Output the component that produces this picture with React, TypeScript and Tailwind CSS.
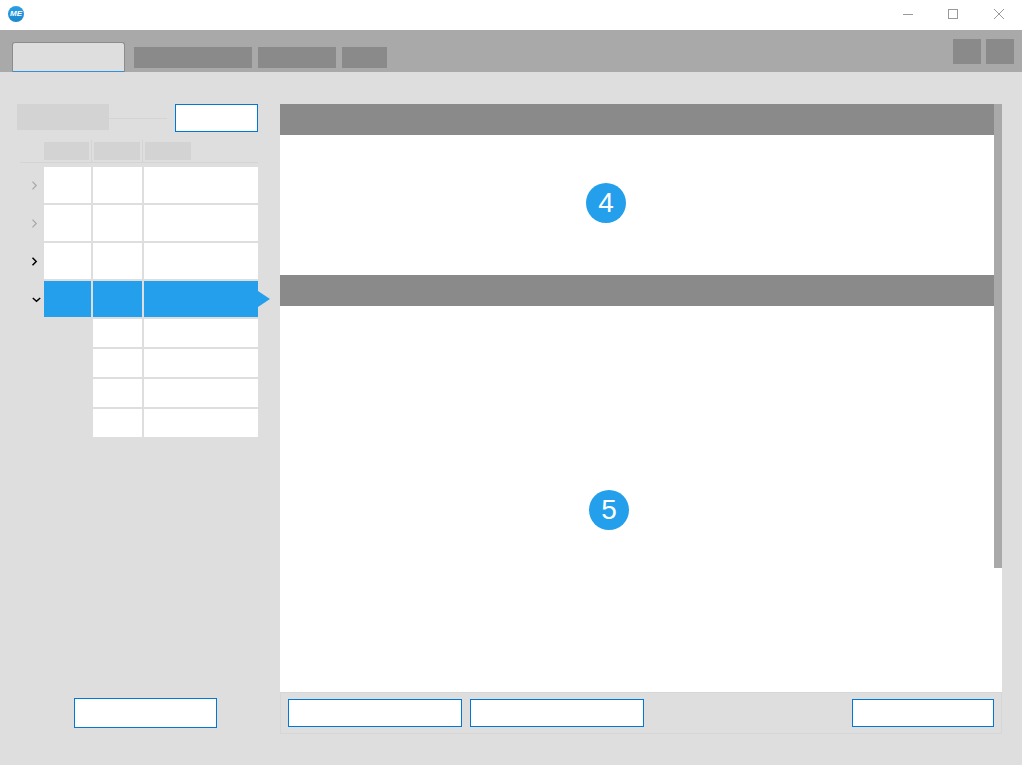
const Chevron = ({ down, color }: { down?: boolean; color: string }) => (
  <svg width="9" height="9" viewBox="0 0 9 9" fill="none" stroke={color} strokeWidth={color === "#000000" ? 1.5 : 1.2}>
    <path d={down ? "M0.8 3 L4.5 6.3 L8.2 3" : "M2.5 0.7 L6.2 4.5 L2.5 8.3"} />
  </svg>
);

const TREE_ROWS = [
  { color: "#a6a6a6", selected: false },
  { color: "#a6a6a6", selected: false },
  { color: "#000000", selected: false },
  { color: "#000000", selected: true, down: true },
];

function TitleBar() {
  return (
    <div className="flex h-[30px] items-center bg-white pb-[2px] pl-2">
      <div className="flex h-4 w-4 items-center justify-center rounded-full bg-gradient-to-b from-[#2aa0e6] to-[#1b86cc] text-[8px] font-bold italic leading-none text-white">
        ME
      </div>
      <div className="ml-auto flex items-center">
        <svg width="10" height="10" viewBox="0 0 10 10" stroke="#999999" fill="none" className="mr-[35px]">
          <path d="M0 5.5 H10" />
        </svg>
        <svg width="10" height="10" viewBox="0 0 10 10" stroke="#999999" fill="none" className="mr-[36px]">
          <rect x="0.5" y="0.5" width="9" height="9" />
        </svg>
        <svg width="10" height="10" viewBox="0 0 10 10" stroke="#999999" fill="none" className="mr-[18px]">
          <path d="M0 0 L10 10 M10 0 L0 10" />
        </svg>
      </div>
    </div>
  );
}

function Toolbar() {
  return (
    <div className="flex h-[42px] bg-[#a9a9a9] pl-3 pr-2">
      <div className="mt-3 h-[30px] w-[113px] rounded-t-[3px] border border-b-0 border-[#8c8c8c] bg-[#dedede] shadow-[inset_0_-1px_0_#2f93dc]" />
      <div className="ml-[9px] mt-[17px] h-[21px] w-[118px] bg-[#8a8a8a]" />
      <div className="ml-[6px] mt-[17px] h-[21px] w-[78px] bg-[#8a8a8a]" />
      <div className="ml-[6px] mt-[17px] h-[21px] w-[45px] bg-[#8a8a8a]" />
      <div className="ml-auto mt-[9px] h-[25px] w-7 bg-[#8a8a8a]" />
      <div className="ml-[5px] mt-[9px] h-[25px] w-7 bg-[#8a8a8a]" />
    </div>
  );
}

function TreeTable() {
  return (
    <div>
      <div className="mt-2 ml-[3px] flex h-[23px] items-start border-b border-[#d4d4d4] pl-6">
        <div className="mt-[2px] h-[18px] w-[45px] bg-[#d3d3d3]" />
        <div className="mx-[2px] h-[22px] w-px bg-[#d4d4d4]" />
        <div className="mt-[2px] h-[18px] w-[46px] bg-[#d3d3d3]" />
        <div className="mx-[2px] h-[22px] w-px bg-[#d4d4d4]" />
        <div className="mt-[2px] h-[18px] w-[46px] bg-[#d3d3d3]" />
      </div>

      <div className="mt-1 flex flex-col gap-[2px]">
        {TREE_ROWS.map((row, i) => (
          <div key={i} className="flex h-9 items-center">
            <div className={`flex w-[27px] justify-end ${row.down ? "pr-[3px]" : "pr-[5px]"}`}>
              <Chevron color={row.color} down={row.down} />
            </div>
            <div className={`h-full w-[47px] ${row.selected ? "bg-[#239fec]" : "bg-white"}`} />
            <div className={`ml-[2px] h-full w-[49px] ${row.selected ? "bg-[#239fec]" : "bg-white"}`} />
            <div className={`relative ml-[2px] h-full w-[114px] ${row.selected ? "bg-[#239fec]" : "bg-white"}`}>
              {row.selected && (
                <div className="absolute left-full top-[10px] h-0 w-0 border-y-[8px] border-l-[12px] border-y-transparent border-l-[#239fec]" />
              )}
            </div>
          </div>
        ))}
        {[0, 1, 2, 3].map((i) => (
          <div key={i} className="ml-[76px] flex h-7">
            <div className="h-full w-[49px] bg-white" />
            <div className="ml-[2px] h-full w-[114px] bg-white" />
          </div>
        ))}
      </div>
    </div>
  );
}

const NumberBadge = ({ value, className }: { value: number; className: string }) => (
  <div className={`flex h-10 w-10 items-center justify-center rounded-full bg-[#239fec] text-[28px] text-white ${className}`}>
    {value}
  </div>
);

export default function App() {
  return (
    <div className="h-[765px] w-[1022px] overflow-hidden bg-[#dedede] font-['Liberation_Sans',sans-serif]">
      <TitleBar />
      <Toolbar />
      <div className="flex pl-[17px] pt-8">
        {/* left list */}
        <div className="flex h-[630px] w-[241px] flex-col">
          <div className="flex h-7 items-start">
            <div className="h-[26px] w-[92px] bg-[#d3d3d3]" />
            <div className="mt-[14px] h-px w-[58px] bg-[#d4d4d4]" />
            <div className="ml-2 h-7 w-[83px] border border-[#0078d7] bg-white" />
          </div>
          <TreeTable />
          <div className="mb-[6px] ml-[57px] mt-auto h-[30px] w-[143px] border border-[#0078d7] bg-white" />
        </div>

        {/* right panel */}
        <div className="ml-[22px] flex h-[630px] w-[722px] flex-col">
          <div className="flex flex-1 bg-white">
            <div className="flex flex-1 flex-col">
              <div className="h-[31px] bg-[#8a8a8a]" />
              <div className="flex h-[140px] items-center pb-[4px]">
                <NumberBadge value={4} className="ml-[306px]" />
              </div>
              <div className="h-[31px] bg-[#8a8a8a]" />
              <div className="flex flex-1 items-start pt-[184px]">
                <NumberBadge value={5} className="ml-[309px]" />
              </div>
            </div>
            <div className="w-2">
              <div className="h-[464px] bg-[#a9a9a9]" />
            </div>
          </div>
          <div className="flex h-[42px] items-center border border-[#d6d6d6] pl-[7px] pr-[7px]">
            <div className="h-7 w-[174px] border border-[#0078d7] bg-white" />
            <div className="ml-2 h-7 w-[174px] border border-[#0078d7] bg-white" />
            <div className="ml-auto h-7 w-[142px] border border-[#0078d7] bg-white" />
          </div>
        </div>
      </div>
    </div>
  );
}
